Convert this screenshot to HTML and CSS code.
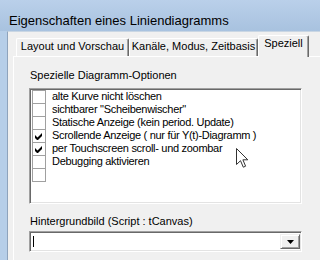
FILE: index.html
```html
<!DOCTYPE html>
<html>
    <head>
        <meta charset="utf-8">
        <title>Eigenschaften eines Liniendiagramms</title>
        <link rel="stylesheet" href="styles.css">
    </head>
    <body>
        <div class="window">
            <div class="titlebar">Eigenschaften eines Liniendiagramms</div>
            <div class="client">
                <div class="tabs">
                    <div class="tab tab-layout">Layout und Vorschau</div>
                    <div class="tab tab-kanal">Kanäle, Modus, Zeitbasis</div>
                    <div class="tab tab-special active">Speziell</div>
                </div>
                <div class="panel">
                    <div class="caption">Spezielle Diagramm-Optionen</div>
                    <div class="checklist">
                        <div class="item"><span class="box"></span>alte Kurve nicht löschen</div>
                        <div class="item"><span class="box"></span>sichtbarer "Scheibenwischer"</div>
                        <div class="item"><span class="box"></span>Statische Anzeige (kein period. Update)</div>
                        <div class="item">
                            <span class="box"><svg class="check" width="7" height="7" viewBox="0 0 7 7"><path d="M0 2v3l2 2h1l4-4V0L2.5 4.5z" fill="#000"/></svg></span>Scrollende Anzeige ( nur für Y(t)-Diagramm )
                        </div>
                        <div class="item">
                            <span class="box"><svg class="check" width="7" height="7" viewBox="0 0 7 7"><path d="M0 2v3l2 2h1l4-4V0L2.5 4.5z" fill="#000"/></svg></span>per Touchscreen scroll- und zoombar
                        </div>
                        <div class="item"><span class="box"></span>Debugging aktivieren</div>
                        <div class="item last"><span class="box"></span></div>
                    </div>
                    <div class="caption caption-bg">Hintergrundbild (Script : tCanvas)</div>
                    <div class="combo">
                        <span class="caret"></span>
                        <span class="combo-btn">
                            <svg width="7" height="4" viewBox="0 0 7 4"><path d="M0 0h7L3.5 4z" fill="#000"/></svg>
                        </span>
                    </div>
                </div>
            </div>
            <svg class="cursor" width="13" height="20" viewBox="0 0 13 20">
                <path d="M0.5 0.5V16.5L4.5 12.7L7.3 19.2L9.6 18.2L6.9 11.8H11.8Z" fill="#fff" stroke="#333" stroke-width="1"/>
            </svg>
        </div>
    </body>
</html>
```

FILE: styles.css
```css
body {
    margin: 0;
    font-family: "Liberation Sans", Arial, sans-serif;
    font-size: 11px;
    color: #000;
}

.window {
    position: relative;
    width: 320px;
    height: 260px;
    overflow: hidden;
    background: #b6cee8;
    display: flex;
    flex-direction: column;
}

.titlebar {
    height: 31px;
    box-sizing: border-box;
    padding: 13px 0 0 9px;
    font-size: 13px;
    line-height: 15px;
    background: linear-gradient(#bad0ea, #a8c2df);
    white-space: nowrap;
}

.client {
    flex: 1;
    margin-left: 7px;
    border-left: 1px solid #8ea3bc;
    border-top: 1px solid #c9d6e3;
    background: #f0f0f0;
    display: flex;
    flex-direction: column;
}

.tabs {
    display: flex;
    align-items: flex-end;
    height: 21px;
    margin-top: 3px;
    padding-left: 8px;
    line-height: 13px;
}

.tab {
    height: 18px;
    box-sizing: border-box;
    padding-top: 1px;
    text-align: center;
    white-space: nowrap;
    background: #f0f0f0;
    border-top: 1px solid #fff;
    border-left: 1px solid #fff;
    border-right: 1px solid #696969;
    box-shadow: inset -1px 0 #a0a0a0;
    border-radius: 2px 2px 0 0;
}

.tab-layout {
    width: 113px;
}

.tab-kanal {
    width: 129px;
}

.tab-special {
    width: 51px;
}

.tab.active {
    position: relative;
    z-index: 1;
    height: 22px;
    margin-bottom: -1px;
}

.panel {
    flex: 1;
    margin-left: 5px;
    padding-left: 15px;
    border-top: 1px solid #fff;
    border-left: 1px solid #fff;
    display: flex;
    flex-direction: column;
    align-items: flex-start;
}

.caption {
    margin: 12px 0 0 1px;
    line-height: 13px;
    white-space: nowrap;
}

.checklist {
    width: 273px;
    height: 116px;
    box-sizing: border-box;
    margin-top: 6px;
    padding: 0 0 0 2px;
    background: #fff;
    border: 1px solid;
    border-color: #a0a0a0 #fff #fff #a0a0a0;
    box-shadow: inset 1px 1px #696969, inset -1px -1px #e3e3e3;
    padding-top: 1px;
}

.item {
    display: flex;
    align-items: flex-start;
    height: 13px;
    line-height: 13px;
    white-space: nowrap;
    letter-spacing: -0.3px;
}

.box {
    width: 12px;
    height: 12px;
    margin-right: 6px;
    border: 1px solid #a0a0a0;
    border-bottom: none;
    display: flex;
    align-items: center;
    justify-content: center;
    flex-shrink: 0;
}

.item.last .box {
    border-bottom: 1px solid #a0a0a0;
}

.check {
    display: block;
    margin: 1px 1px 0 0;
}

.caption-bg {
    margin-top: 11px;
}

.combo {
    position: relative;
    width: 273px;
    height: 21px;
    box-sizing: border-box;
    margin-top: 3px;
    background: #fff;
    border: 1px solid;
    border-color: #a0a0a0 #fff #fff #a0a0a0;
    box-shadow: inset 1px 1px #696969, inset -1px -1px #e3e3e3;
    display: flex;
    align-items: stretch;
    padding: 2px 1px 2px 2px;
}

.caret {
    width: 1px;
    margin: 2px 0 2px 1px;
    background: #000;
}

.combo-btn {
    margin-left: auto;
    width: 20px;
    box-sizing: border-box;
    background: #f0f0f0;
    border: 1px solid;
    border-color: #f0f0f0 #696969 #696969 #f0f0f0;
    box-shadow: inset 1px 1px #fff, inset -1px -1px #a0a0a0;
    display: flex;
    align-items: center;
    justify-content: center;
}

.cursor {
    position: absolute;
    left: 236px;
    top: 148px;
}
```
